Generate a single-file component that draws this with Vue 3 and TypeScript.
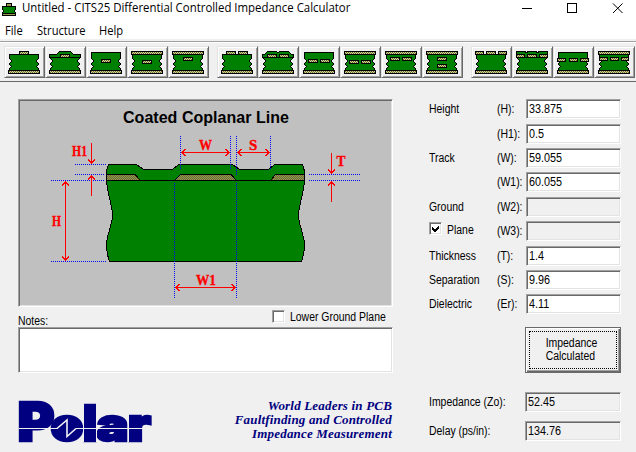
<script setup lang="ts">
type Rect = [x: number, y: number, w: number]
interface Tool {
  top: 'bare' | 'plane' | 'low' | 'coat1' | 'coat2' | 'coat3'
  tracks: Rect[]
}

const toolGroups: Tool[][] = [
  [
    { top: 'low', tracks: [[11, 0, 10]] },
    { top: 'coat1', tracks: [[11, 3, 10]] },
    { top: 'bare', tracks: [[11, 8, 10]] },
    { top: 'plane', tracks: [[11, 9, 10]] },
    { top: 'plane', tracks: [[11, 6, 10]] },
  ],
  [
    { top: 'low', tracks: [[5, 0, 10], [17, 0, 10]] },
    { top: 'coat2', tracks: [[5, 3, 10], [17, 3, 10]] },
    { top: 'bare', tracks: [[5, 8, 10], [17, 8, 10]] },
    { top: 'plane', tracks: [[5, 9, 10], [17, 9, 10]] },
    { top: 'plane', tracks: [[5, 6, 10], [17, 6, 10]] },
    { top: 'plane', tracks: [[11, 6, 10], [11, 13, 10]] },
  ],
  [
    { top: 'low', tracks: [[0, 0, 9], [11, 0, 10], [23, 0, 9]] },
    { top: 'coat3', tracks: [[0, 3, 9], [11, 3, 10], [23, 3, 9]] },
    { top: 'bare', tracks: [[0, 7, 9], [12, 7, 9], [23, 7, 9]] },
    { top: 'plane', tracks: [[1, 6, 9], [12, 6, 9], [23, 6, 8]] },
  ],
]

// Buttons are an odd number of pixels wide, so the weave phase alternates along each group.
const weaveId = (group: number, index: number): string => `url(#weave-${(index + (group === 0 ? 1 : 0)) % 2})`

const topOf = (t: Tool): number => (t.top === 'low' ? 3 : t.top.startsWith('coat') ? 6 : t.top === 'bare' ? 1 : 3)

function bodyPath(t: Tool): string {
  const y = topOf(t) + 0.5
  return `M1.5 ${y}V7.5L3.5 9.5V10.5L1.5 12.5V13.5L3.5 15.5L1.5 17.5V19.5H30.5V17.5L28.5 15.5L30.5 13.5V12.5L28.5 10.5V9.5L30.5 7.5V${y}Z`
}

const coats: Record<string, string> = {
  coat1: 'M0.5 6.5V3.5H7.5L10.5 0.5H21.5L24.5 3.5H31.5V6.5Z',
  coat2: 'M0.5 6.5V3.5H2.5L5.5 0.5H14.5L16 1.5L17.5 0.5H26.5L29.5 3.5H31.5V6.5Z',
  coat3: 'M0.5 6.5V0.5H8.5L10.5 1.5L12.5 0.5H19.5L21.5 1.5L23.5 0.5H31.5V6.5Z',
}

interface Row {
  name: string
  symbol: string
  value: string
  disabled?: boolean
  check?: boolean
}
const rows: Row[] = [
  { name: 'Height', symbol: '(H):', value: '33.875' },
  { name: '', symbol: '(H1):', value: '0.5' },
  { name: 'Track', symbol: '(W):', value: '59.055' },
  { name: '', symbol: '(W1):', value: '60.055' },
  { name: 'Ground', symbol: '(W2):', value: '', disabled: true },
  { name: 'Plane', symbol: '(W3):', value: '', disabled: true, check: true },
  { name: 'Thickness', symbol: '(T):', value: '1.4' },
  { name: 'Separation', symbol: '(S):', value: '9.96' },
  { name: 'Dielectric', symbol: '(Er):', value: '4.11' },
]
const results = [
  { name: 'Impedance (Zo):', value: '52.45' },
  { name: 'Delay (ps/in):', value: '134.76' },
]

const guides = [
  'M75 164.5H106', 'M75 174.5H104', 'M51 180.5H104', 'M51 261.5H106',
  'M309 174.5H360', 'M309 180.5H360',
  'M180.5 136V169', 'M230.5 136V169', 'M236.5 136V175', 'M270.5 136V169',
  'M174.5 183V298', 'M236.5 183V298',
]
const arrows = [
  'M91.5 143V163M88 159.5L91.5 163L95 159.5',
  'M91.5 196V176M88 179.5L91.5 176L95 179.5',
  'M65.5 182V260M62 185.5L65.5 182L69 185.5M62 256.5L65.5 260L69 256.5',
  'M182 152.5H229M185.5 149L182 152.5L185.5 156M225.5 149L229 152.5L225.5 156',
  'M238 152.5H269M241.5 149L238 152.5L241.5 156M265.5 149L269 152.5L265.5 156',
  'M331.5 153V173M328 169.5L331.5 173L335 169.5',
  'M331.5 202V182M328 185.5L331.5 182L335 185.5',
  'M176 287.5H235M179.5 284L176 287.5L179.5 291M231.5 284L235 287.5L231.5 291',
]
</script>

<template>
  <div class="window">
    <header class="titlebar">
      <svg class="app-icon" width="14" height="13" shape-rendering="crispEdges">
        <path d="M4 0H10V3H14V6L13 8L14 10V13H0V10L1 8L0 6V3H4Z" fill="#000" />
        <path d="M1 4H13V6L12 8L13 10H1L2 8L1 6Z" fill="#008000" />
        <path d="M5 1H9V3H5ZM1 11H13V12H1Z" fill="#9a9a50" />
      </svg>
      <h1 class="ui title">Untitled - CITS25 Differential Controlled Impedance Calculator</h1>
      <svg class="controls" width="102" height="11" fill="none" stroke="#000">
        <path d="M0 5.5H10M45.5 0.5H54.5V9.5H45.5Z" shape-rendering="crispEdges" />
        <path d="M91 0.5L100.500 10M100.500 0.5L91 10" />
      </svg>
    </header>
    <nav class="menu">
      <span class="ui">File</span>
      <span class="ui">Structure</span>
      <span class="ui">Help</span>
    </nav>

    <div class="toolbar">
      <div v-for="(group, g) in toolGroups" :key="g" class="tool-group">
        <button v-for="(tool, i) in group" :key="i" class="tool">
          <svg width="32" height="23" shape-rendering="crispEdges">
            <defs v-if="g === 0 && i < 2">
              <pattern :id="`weave-${i}`" :x="i" width="2" height="2" patternUnits="userSpaceOnUse">
                <rect width="2" height="2" fill="#c0c0c0" />
                <path d="M0 0H1V1H0ZM1 1H2V2H1Z" fill="#808000" />
              </pattern>
            </defs>
            <path v-if="coats[tool.top]" :d="coats[tool.top]" fill="#008000" stroke="#000" />
            <path :d="bodyPath(tool)" fill="#008000" stroke="#000" />
            <rect v-if="tool.top === 'plane'" x="0.5" y="0.5" width="31" height="3" :fill="weaveId(g, i)" stroke="#000" />
            <rect x="0.5" y="19.5" width="31" height="3" :fill="weaveId(g, i)" stroke="#000" />
            <rect
              v-for="(r, k) in tool.tracks" :key="k" :x="r[0] + 0.5" :y="r[1] + 0.5" :width="r[2] - 1" height="3"
              rx="1" :fill="weaveId(g, i)" stroke="#000"
            />
          </svg>
        </button>
      </div>
    </div>

    <main class="content">
      <section class="left">
        <div class="sunken diagram">
          <svg width="371" height="204" viewBox="20 101 371 204">
            <defs>
              <pattern id="weave-track" width="2" height="2" patternUnits="userSpaceOnUse">
                <rect width="2" height="2" fill="#808080" />
                <path d="M0 0H1V1H0ZM1 1H2V2H1Z" fill="#808000" />
              </pattern>
              <pattern id="weave-ground" x="1" width="2" height="2" patternUnits="userSpaceOnUse">
                <rect width="2" height="2" fill="#808080" />
                <path d="M0 0H1V1H0ZM1 1H2V2H1Z" fill="#808000" />
              </pattern>
            </defs>
            <g shape-rendering="crispEdges" stroke="#000">
              <path
                d="M106.500 180.500V171L108.500 164.500H136.500L143.500 169.500H172.500L178.500 164.500H232.500L239.500 169.500H268.500L274.500 164.500H302.500L304.500 171V180.500C303.500 195 298.500 206 298.500 215C298.500 225 304.500 235 304.500 245C304.500 253 303 257 301.500 261.500H109.500C108 257 106.500 253 106.500 245C106.500 235 112.500 225 112.500 215C112.500 206 107.500 195 106.500 180.500Z"
                fill="#008000"
              />
              <path
                d="M106.500 180.500V174.500H135L140.500 180.500ZM270.500 180.500L275.500 174.500H304.500V180.500Z"
                fill="url(#weave-ground)"
              />
              <path d="M174.500 180.500L180.500 174.500H231L236.500 180.500Z" fill="url(#weave-track)" />
              <path d="M106 180.500H305" />
            </g>
            <g fill="none" shape-rendering="crispEdges">
              <path v-for="d in guides" :key="d" :d="d" stroke="#0000ff" stroke-dasharray="1 1" />
              <path v-for="d in arrows" :key="d" :d="d" stroke="#ff0000" />
            </g>
            <text class="caption" x="123" y="123" textLength="166">Coated Coplanar Line</text>
            <g class="dim">
              <text x="72" y="156" textLength="15" lengthAdjust="spacingAndGlyphs">H1</text>
              <text x="52" y="226" textLength="9" lengthAdjust="spacingAndGlyphs">H</text>
              <text x="199" y="150" textLength="13" lengthAdjust="spacingAndGlyphs">W</text>
              <text x="249" y="150">S</text>
              <text x="336.500" y="166" textLength="9" lengthAdjust="spacingAndGlyphs">T</text>
              <text x="196" y="285" textLength="20" lengthAdjust="spacingAndGlyphs">W1</text>
            </g>
          </svg>
        </div>
        <div class="notes-head">
          <span class="lbl">Notes:</span>
          <label class="lower"><span class="box" /><span class="lbl">Lower Ground Plane</span></label>
        </div>
        <div class="sunken notes" />
        <footer class="brand">
          <svg class="logo" width="134" height="42" viewBox="18 401 134 42">
            <g class="logo-text">
              <text x="17.500" y="440.500" font-size="53" textLength="37" lengthAdjust="spacingAndGlyphs">P</text>
              <text x="50.500" y="440.500" font-size="46" textLength="33" lengthAdjust="spacingAndGlyphs">o</text>
              <text x="82" y="440.500" font-size="49" textLength="16" lengthAdjust="spacingAndGlyphs">l</text>
              <text x="96.500" y="440.500" font-size="46" textLength="32" lengthAdjust="spacingAndGlyphs">a</text>
              <text x="127" y="440.500" font-size="46" textLength="24" lengthAdjust="spacingAndGlyphs">r</text>
            </g>
            <ellipse cx="67" cy="428" rx="12" ry="10" fill="#000080" />
            <path
              d="M19 428.500H58M76 428.500H143M83.500 403V442M96.500 403V442M128.500 414V442"
              fill="none" stroke="#f0f0f0" shape-rendering="crispEdges"
            />
            <path d="M57 428.500L67 420V436.500L76 428.500" fill="none" stroke="#f0f0f0" stroke-width="1.600" />
          </svg>
          <p class="tagline">World Leaders in PCB<br>Faultfinding and Controlled<br>Impedance Measurement</p>
        </footer>
      </section>

      <section class="right">
        <div class="params">
          <template v-for="row in rows" :key="row.symbol">
            <label v-if="row.check" class="plane">
              <span class="box">
                <svg width="9" height="9" shape-rendering="crispEdges"><path d="M1 3V6L3 8H4L8 4V1L4 5H3Z" fill="#000" /></svg>
              </span>
              <span class="lbl">{{ row.name }}</span>
            </label>
            <span v-else class="lbl">{{ row.name }}</span>
            <span class="lbl">{{ row.symbol }}</span>
            <div class="sunken field" :class="{ off: row.disabled }"><span class="val">{{ row.value }}</span></div>
          </template>
        </div>
        <button class="calc"><span class="focus"><span class="calc-text">Impedance<br>Calculated</span></span></button>
        <div class="results">
          <template v-for="r in results" :key="r.name">
            <span class="lbl">{{ r.name }}</span>
            <div class="sunken field off"><span class="val">{{ r.value }}</span></div>
          </template>
        </div>
      </section>
    </main>
  </div>
</template>

<style>
body { background: #f0f0f0; }
</style>

<style scoped>
* { box-sizing: border-box; }
.window {
  width: 636px;
  height: 452px;
  overflow: hidden;
  background: #f0f0f0;
  color: #000;
  font: 12px/20px "Liberation Sans", Arial, sans-serif;
}
.titlebar {
  display: flex;
  height: 20px;
  padding: 3px 12px 0 2px;
  background: #fff;
}
.app-icon { flex: none; margin-right: 6px; }
.ui {
  font-family: "Open Sans", "Noto Sans", sans-serif;
  font-size: 12px;
  line-height: 16px;
  font-weight: 400;
  white-space: nowrap;
  transform-origin: 0 50%;
}
.title { margin: -3px 0 0; width: 340px; transform: scaleX(.951); }
.controls { margin-left: auto; }
.menu {
  display: grid;
  grid-template-columns: 32px 62px auto;
  height: 19px;
  padding: 3px 0 0 5px;
  background: #fff;
}
.menu .ui { transform: scaleX(.93); }

.toolbar {
  display: flex;
  gap: 8px;
  height: 41px;
  margin-top: 2px;
  padding: 3px 0 0 4px;
  border-top: 1px solid #a0a0a0;
  border-bottom: 1px solid #696969;
  box-shadow: inset 0 1px #fff;
}
.tool-group { display: flex; }
.tool {
  width: 41px;
  height: 32px;
  margin-top: 1px;
  padding: 3px;
  border: 1px solid;
  border-color: #e3e3e3 #696969 #696969 #e3e3e3;
  border-radius: 0;
  background: #f0f0f0;
  box-shadow: inset 1px 1px #fff, inset -1px -1px #a0a0a0;
  line-height: 0;
}
.tool svg { display: block; }

.content {
  display: flex;
  justify-content: space-between;
  padding: 17px 15px 0 18px;
}
.sunken {
  border: 1px solid;
  border-color: #a0a0a0 #fff #fff #a0a0a0;
  box-shadow: inset 1px 1px #696969, inset -1px -1px #e3e3e3;
  background: #fff;
}
.left { width: 375px; }
.diagram { height: 208px; padding: 1px; background: #c0c0c0; }
.diagram svg { display: block; }
.caption { font: bold 16px "Liberation Sans", Arial, sans-serif; }
.dim {
  font: bold 15px "Liberation Serif", "Times New Roman", serif;
  fill: #f00;
  stroke: #f00;
  stroke-width: .35;
}

.lbl {
  display: block;
  white-space: nowrap;
  transform: scaleX(.87);
  transform-origin: 0 50%;
}
.val {
  display: block;
  white-space: nowrap;
  transform: scaleX(.9);
  transform-origin: 0 50%;
}
.notes-head {
  display: flex;
  justify-content: space-between;
  height: 20px;
}
.notes-head > .lbl { padding-top: 4px; }
.lower { display: flex; width: 121px; }
.lower .box { margin: 3px 5px 0 0; }
.box {
  flex: none;
  width: 13px;
  height: 13px;
  padding: 1px;
  border: 1px solid;
  border-color: #a0a0a0 #fff #fff #a0a0a0;
  box-shadow: inset 1px 1px #696969, inset -1px -1px #e3e3e3;
  background: #fff;
}
.box svg { display: block; }
.notes { height: 46px; }
.brand {
  display: flex;
  justify-content: space-between;
  padding-top: 28px;
}
.logo { overflow: visible; }
.logo-text {
  font-family: Inter, "Liberation Sans", sans-serif;
  font-weight: 900;
  fill: #000080;
  stroke: #000080;
  stroke-width: 2.5;
}
.tagline {
  margin: -2px 1px 0 0;
  color: #000080;
  font: italic bold 13px/14px "Liberation Serif", "Times New Roman", serif;
  letter-spacing: .18px;
  text-align: right;
  white-space: nowrap;
}

.right { width: 192px; }
.params {
  display: grid;
  grid-template-columns: 68px 29px 95px;
  grid-template-rows: 25px 24px 24px 25px 24px 25px 24px 24px 20px;
}
.field { height: 20px; padding-left: 2px; line-height: 18px; }
.off { background: #f0f0f0; }
.plane { display: flex; line-height: 18px; }
.plane .box { margin: 1px 5px 0 0; }
.calc {
  display: block;
  width: 96px;
  height: 46px;
  margin: 13px 0 19px 96px;
  padding: 3px;
  border: 1px solid #696969;
  border-radius: 0;
  background: #f0f0f0;
  box-shadow: inset 1px 1px #fff, inset -1px -1px #696969, inset -2px -2px #a0a0a0;
  color: #000;
  font: 12px/13px "Liberation Sans", Arial, sans-serif;
}
.focus {
  display: flex;
  align-items: center;
  width: 88px;
  height: 38px;
  border: 1px dotted #000;
}
.calc-text {
  flex: 1;
  margin: 0 -5px;
  text-align: left;
  padding-left: 23px;
  transform: scaleX(.87);
  transform-origin: 5px 50%;
}
.results {
  display: grid;
  grid-template-columns: 96px 96px;
  row-gap: 9px;
}
</style>
